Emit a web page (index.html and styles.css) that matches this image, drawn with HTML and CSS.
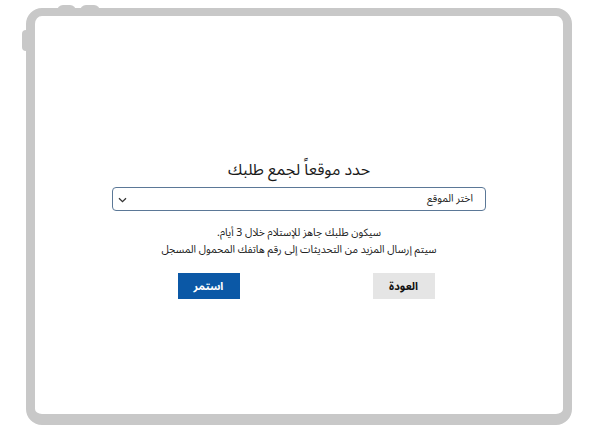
FILE: index.html
```html
<!DOCTYPE html>
<html lang="ar" dir="rtl">
<head>
    <meta charset="UTF-8">
    <title>حدد موقعاً لجمع طلبك</title>

    <link rel="stylesheet" href="styles.css">
</head>
<body>

    <div class="tablet">
        <span class="zr zr-1"></span>
        <span class="zr zr-2"></span>
        <span class="zr zr-lado"></span>

        <div class="tela">
            <h1>حدد موقعاً لجمع طلبك</h1>

            <div class="seletor">
                <span>اختر الموقع</span>
                <svg width="9" height="6" viewBox="0 0 9 6">
                    <path d="M1 1.2 L4.5 4.6 L8 1.2" fill="none" stroke="#333" stroke-width="1.3"/>
                </svg>
            </div>

            <p class="aviso">سيكون طلبك جاهز للإستلام خلال 3 أيام.</p>
            <p class="aviso">سيتم إرسال المزيد من التحديثات إلى رقم هاتفك المحمول المسجل</p>

            <div class="acoes">
                <button class="botao voltar">العودة</button>
                <button class="botao continuar">استمر</button>
            </div>
        </div>
    </div>

</body>
</html>
```

FILE: styles.css
```css
/* estilo */
*, *:after, *:before {
    box-sizing: border-box;
    margin: 0;
    padding: 0;
}

html {
    background: #fff;
    color: #1c1c1c;
    font-family: "Noto Sans Arabic", "DejaVu Sans", sans-serif;
}

body {
    padding: 8px 28px 0 26px;
}

.tablet {
    position: relative;
    width: 546px;
    height: 417px;
    border: 9px solid #c8c8c8;
    border-top-width: 8px;
    border-bottom-width: 11px;
    border-radius: 16px;
    background: #fff;
}

    /* botoes do aparelho */
    .zr {
        position: absolute;
        background: #c8c8c8;
    }

    .zr-1 {
        top: -11px;
        left: 22px;
        width: 19px;
        height: 6px;
        border-radius: 8px 8px 0 0;
    }

    .zr-2 {
        top: -11px;
        left: 45px;
        width: 20px;
        height: 6px;
        border-radius: 8px 8px 0 0;
    }

    .zr-lado {
        top: 14px;
        left: -13px;
        width: 6px;
        height: 21px;
        border-radius: 4px 0 0 4px;
    }

.tela {
    display: flex;
    flex-direction: column;
    align-items: center;
    padding-top: 142px;
}

h1 {
    font-size: 16px;
    font-weight: normal;
    line-height: 24px;
    color: #1a1a1a;
}

.seletor {
    display: flex;
    align-items: center;
    justify-content: space-between;
    width: 374px;
    height: 24px;
    margin: 5px 0 0 0;
    padding: 0 12px 0 5px;
    border: 1px solid #5b7897;
    border-radius: 4px;
    font-size: 10.5px;
    color: #222;
}

    .seletor svg {
        margin-top: 1px;
    }

.aviso {
    font-size: 10.5px;
    line-height: 17px;
    color: #222;
}

.seletor + .aviso {
    margin-top: 14px;
}

.acoes {
    display: flex;
    justify-content: center;
    gap: 133px;
    padding-left: 14px;
    margin-top: 14px;
}

.botao {
    width: 62px;
    height: 26px;
    border: 0;
    font-family: inherit;
    font-size: 11px;
    font-weight: bold;
}

.voltar {
    background: #e5e5e5;
    color: #111;
}

.continuar {
    background: #0b58a6;
    color: #fff;
}
```
